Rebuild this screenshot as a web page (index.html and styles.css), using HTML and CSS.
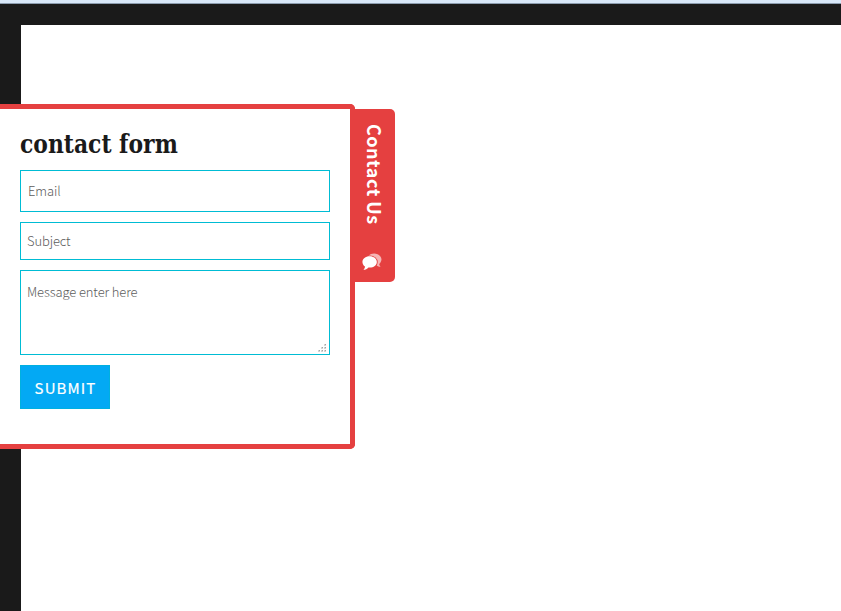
FILE: index.html
```
<!DOCTYPE html>
<html lang="en">
<head>
<meta charset="utf-8">
<title>Contact form</title>
<link rel="stylesheet" href="styles.css">
</head>
<body>
<div class="page"></div>
<aside class="drawer">
  <form class="panel">
    <h2 class="title"><span>contact form</span></h2>
    <input class="field email" type="text" placeholder="Email">
    <input class="field subject" type="text" placeholder="Subject">
    <div class="message-box">
      <textarea class="field message" placeholder="Message enter here"></textarea>
      <svg class="grip" width="8" height="8" viewBox="0 0 8 8" fill="#d4d4d4" shape-rendering="crispEdges"><path d="M6 0h2v2h-2zM3 3h2v2h-2zM6 3h2v2h-2zM0 6h2v2h-2zM3 6h2v2h-2zM6 6h2v2h-2z"/><path fill="#a4a4a4" d="M7 0h1v1h-1zM4 3h1v1h-1zM7 3h1v1h-1zM1 6h1v1h-1zM4 6h1v1h-1zM7 6h1v1h-1z"/></svg>
    </div>
    <button class="submit" type="button">SUBMIT</button>
  </form>
  <div class="tab">
    <span class="tab-label">Contact Us</span>
    <svg class="chat" width="20" height="18" viewBox="0 0 21 19">
      <path fill="#f5b5b5" d="M7 3C8.300 1.200 10.400 .5 12.700 .5c4.300 0 7.800 2.800 7.800 6.200 0 2-.9 3.600-2.400 4.800.1 1.300.7 2.200 1.600 3-1.600 0-3.100-.5-4.500-1.600z"/>
      <ellipse cx="8.300" cy="9.500" rx="8.300" ry="6.900" fill="#e54040"/>
      <path fill="#fff" d="M8 3.500c4.300 0 7.600 2.600 7.600 5.900s-3.300 6-7.600 6l-1.200-.1C5.400 16.800 3.600 17.800 1.500 17.800c1-1 1.500-2 1.600-3.500C1.400 13.200.4 11.500.4 9.500.4 6.200 3.700 3.500 8 3.500z"/>
    </svg>
  </div>
</aside>
</body>
</html>
```
FILE: styles.css
```
* { box-sizing: border-box; }
body {
  margin: 0;
  height: 611px;
  overflow: hidden;
  background: #1a1a1a;
  border-top: 3px solid #d9e8f8;
  font-family: "Noto Sans CJK SC", "Noto Sans", sans-serif;
}
.page {
  height: 586px;
  margin: 22px 0 0 21px;
  background: #fff;
}
body::before {
  content: "";
  display: block;
  height: 1px;
  margin-bottom: -1px;
  background: #8d9db0;
}
.drawer {
  position: absolute;
  top: 104px;
  left: 0;
  display: flex;
  align-items: flex-start;
}
.panel {
  display: flex;
  flex-direction: column;
  align-items: flex-start;
  gap: 10px;
  width: 355px;
  height: 345px;
  padding: 15px 20px 0;
  border: 5px solid #e54040;
  border-left: 0;
  border-radius: 0 5px 5px 0;
  background: #fff;
}
.title {
  height: 36px;
  margin: 0;
  color: #1a1a1a;
  font: bold 26px/40px "DejaVu Serif Condensed", "DejaVu Serif", serif;
  white-space: nowrap;
}
.title span {
  display: inline-block;
  transform-origin: left center;
  transform: scaleX(.935);
}
.field {
  display: block;
  width: 310px;
  margin: 0;
  padding: 0 6px;
  border: 1px solid #00bcd4;
  border-radius: 0;
  outline: 0;
  background: #fff;
  font: 300 13px/20px "Noto Sans CJK SC", "Noto Sans", sans-serif;
  letter-spacing: -.12px;
}
.field::placeholder { color: #5c5c5c; opacity: 1; }
.email { height: 42px; padding: 0 7px 1px; }
.subject { height: 38px; padding-bottom: 1px; }
.message-box { position: relative; }
.message { height: 85px; padding-top: 11px; resize: none; }
.grip { position: absolute; right: 4px; bottom: 3px; }
.submit {
  width: 90px;
  height: 44px;
  padding: 2px 0 0 1px;
  border: 1px solid #00b0e0;
  background: #03a9f4;
  color: #fff;
  font: 400 15px/20px "Noto Sans CJK SC", "Noto Sans", sans-serif;
  letter-spacing: 1.1px;
  -webkit-text-stroke: .2px #fff;
}
.tab {
  display: flex;
  flex-direction: column;
  align-items: center;
  width: 45px;
  height: 173px;
  margin: 5px 0 0 -5px;
  padding-top: 15px;
  border-radius: 0 5px 5px 0;
  background: #e54040;
  color: #fff;
}
.tab-label {
  height: 129px;
  margin-left: 4px;
  writing-mode: vertical-rl;
  text-orientation: sideways;
  font-size: 18px;
  font-weight: 700;
  line-height: 26px;
  letter-spacing: .5px;
  white-space: nowrap;
}
.chat { display: block; margin-right: 1px; }
```
